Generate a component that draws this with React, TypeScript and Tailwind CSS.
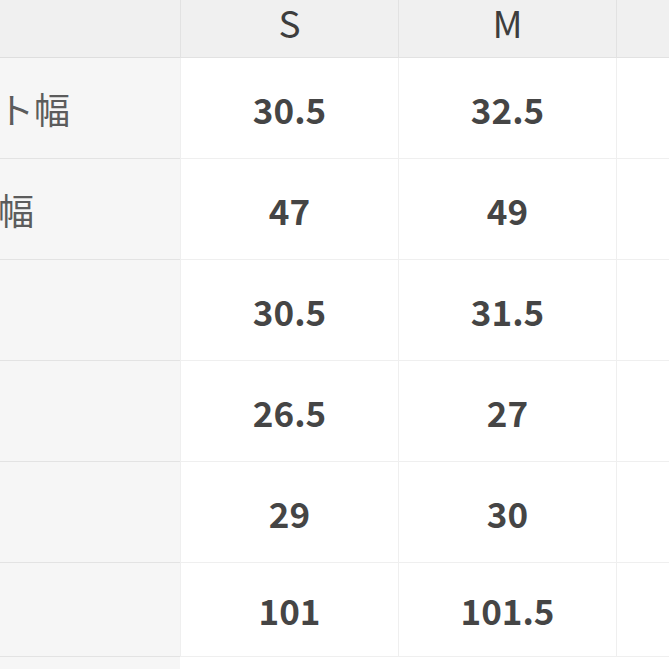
const SIZES = ['S', 'M', 'L'];

const ROWS: { label: string; values: string[]; height: string }[] = [
  { label: 'バスト幅', values: ['30.5', '32.5', ''], height: 'h-[101px]' },
  { label: '肩幅', values: ['47', '49', ''], height: 'h-[101px]' },
  { label: '', values: ['30.5', '31.5', ''], height: 'h-[101px]' },
  { label: '', values: ['26.5', '27', ''], height: 'h-[101px]' },
  { label: '', values: ['29', '30', ''], height: 'h-[101px]' },
  { label: '', values: ['101', '101.5', ''], height: 'h-[94px]' },
];

const font = { fontFamily: '"Noto Sans CJK JP", "Noto Sans", sans-serif' };

export default function App() {
  return (
    <div className="w-[669px] h-[669px] overflow-hidden bg-white" style={font}>
      <div className="-ml-[184px] flex">
        {/* label column, partly outside the view on the left */}
        <div className="w-[364px] shrink-0 bg-[#f6f6f6] flex flex-col h-[669px]">
          <div className="h-[58px] bg-[#f0f0f0] border-b border-[#dedede]" />
          {ROWS.map((row, i) => (
            <div
              key={i}
              className={`${row.height} flex items-center justify-center border-b border-[#e3e3e3] text-[36px] leading-none text-[#5c5c5c] whitespace-nowrap`}
            >
              {row.label}
            </div>
          ))}
        </div>

        {/* size columns */}
        {SIZES.map((size, c) => (
          <div key={size} className="w-[218px] shrink-0 flex flex-col">
            <div className="h-[58px] bg-[#f0f0f0] border-b border-l border-[#e2e2e2] flex items-center justify-center pb-[12px] text-[37px] leading-[1.1] text-[#3d3d3d]">
              {c < 2 ? size : ''}
            </div>
            {ROWS.map((row, i) => (
              <div
                key={i}
                className={`${row.height} flex items-center justify-center border-l border-b border-[#efefef] text-[35px] leading-none font-bold text-[#454545]`}
              >
                {row.values[c]}
              </div>
            ))}
          </div>
        ))}
      </div>
    </div>
  );
}
